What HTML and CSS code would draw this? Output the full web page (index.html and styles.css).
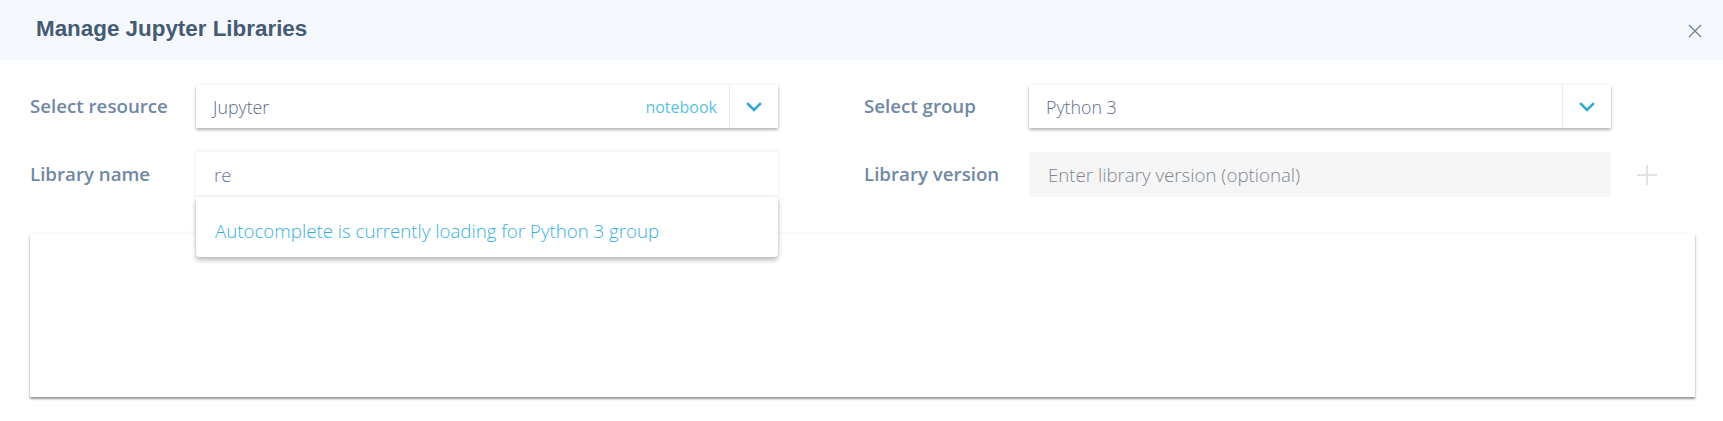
FILE: index.html
```html
<!DOCTYPE html>
<html lang="en">
<head>
<meta charset="utf-8">
<title>Manage Jupyter Libraries</title>
<link rel="stylesheet" href="styles.css">
</head>
<body>
<div class="dialog">
  <div class="header">
    <h1 class="title">Manage Jupyter Libraries</h1>
    <button class="close" aria-label="Close">
      <svg width="14" height="14" viewBox="0 0 14 14"><path d="M1 1 L13 13 M13 1 L1 13" stroke="#6f8399" stroke-width="1.4" fill="none"/></svg>
    </button>
  </div>
  <div class="content">
    <div class="row">
      <div class="field">
        <span class="label">Select resource</span>
        <div class="select">
          <span class="value">Jupyter</span>
          <span class="tag">notebook</span>
          <span class="caret">
            <svg width="16" height="10" viewBox="0 0 16 10"><path d="M2 2 L8 8 L14 2" stroke="#35a6d4" stroke-width="2.6" fill="none" stroke-linecap="square"/></svg>
          </span>
        </div>
      </div>
      <div class="field field-right">
        <span class="label">Select group</span>
        <div class="select">
          <span class="value">Python 3</span>
          <span class="caret">
            <svg width="16" height="10" viewBox="0 0 16 10"><path d="M2 2 L8 8 L14 2" stroke="#35a6d4" stroke-width="2.6" fill="none" stroke-linecap="square"/></svg>
          </span>
        </div>
      </div>
    </div>
    <div class="row row2">
      <div class="field">
        <span class="label">Library name</span>
        <div class="autocomplete">
          <div class="input"><span class="value">re</span></div>
          <div class="dropdown">Autocomplete is currently loading for Python 3 group</div>
        </div>
      </div>
      <div class="field field-right">
        <span class="label">Library version</span>
        <div class="input input-disabled"><span class="placeholder">Enter library version (optional)</span></div>
        <span class="plus">
          <svg width="20" height="20" viewBox="0 0 20 20"><path d="M10 0 V20 M0 10 H20" stroke="#e2e2e2" stroke-width="2" fill="none"/></svg>
        </span>
      </div>
    </div>
    <div class="list-box"></div>
  </div>
</div>
</body>
</html>
```

FILE: styles.css
```css
* { box-sizing: border-box; }
html, body { margin: 0; padding: 0; background: #fff; }
body { font-family: "Open Sans", "Liberation Sans", sans-serif; min-height: 421px; }

.header {
  height: 60px;
  background: #f5f9fd;
  display: flex;
  align-items: center;
  justify-content: space-between;
  padding: 0 21px 0 36px;
}
.title {
  margin: 0;
  font-family: "Liberation Sans", Arial, sans-serif;
  font-weight: 700;
  font-size: 22.4px;
  color: #455a74;
  padding-bottom: 2px;
}
.close {
  border: 0;
  background: none;
  padding: 0;
  width: 14px;
  height: 14px;
  display: flex;
  margin-top: 1px;
}

.content { padding: 0 28px 24px 30px; }

.row {
  display: flex;
  align-items: center;
  margin-top: 25px;
  height: 43px;
}
.row2 { margin-top: 24px; height: 45px; }

.field { display: flex; align-items: center; height: 100%; }
.field-right { margin-left: 86px; }

.label {
  width: 166px;
  flex: none;
  font-weight: 600;
  font-size: 18.7px;
  color: #7088a4;
  padding-bottom: 2px;
}
.field-right .label { width: 165px; }

.select {
  width: 582px;
  height: 43px;
  background: #fff;
  display: flex;
  align-items: center;
  box-shadow: 0 2px 3px rgba(0,0,0,0.28), 0 0 4px rgba(0,0,0,0.06);
}
.value {
  flex: 1;
  padding-left: 17px;
  font-weight: 300;
  font-size: 17.8px;
  color: #5d6c8e;
}
.tag {
  font-weight: 400;
  font-size: 16px;
  color: #5bbfe0;
  padding-right: 12px;
}
.caret {
  width: 49px;
  height: 100%;
  border-left: 1px solid #ececec;
  display: flex;
  align-items: center;
  justify-content: center;
}

.autocomplete { position: relative; width: 582px; height: 45px; }
.input {
  width: 582px;
  height: 45px;
  background: #fff;
  display: flex;
  align-items: center;
  box-shadow: 0 -1px 4px rgba(0,0,0,0.07);
}
.input .value { padding-left: 18px; font-size: 18.5px; color: #66749a; }
.dropdown {
  position: absolute;
  left: 0;
  top: 45px;
  width: 582px;
  height: 60px;
  background: #fff;
  border-radius: 0 0 4px 4px;
  box-shadow: 0 3px 5px rgba(0,0,0,0.28), 0 -1px 3px rgba(0,0,0,0.07);
  padding: 23px 0 0 19px;
  font-weight: 300;
  font-size: 18.7px;
  line-height: 22px;
  color: #35b0de;
  z-index: 2;
}
.input-disabled { background: #f6f6f6; box-shadow: none; }
.placeholder {
  padding-left: 19px;
  font-weight: 300;
  font-size: 18.7px;
  color: #7d8893;
}
.plus { margin-left: 26px; display: flex; }

.list-box {
  margin-top: 37px;
  height: 163px;
  background: #fff;
  box-shadow: 0 2px 2px rgba(0,0,0,0.4), 0 0 4px rgba(0,0,0,0.07);
}
```
